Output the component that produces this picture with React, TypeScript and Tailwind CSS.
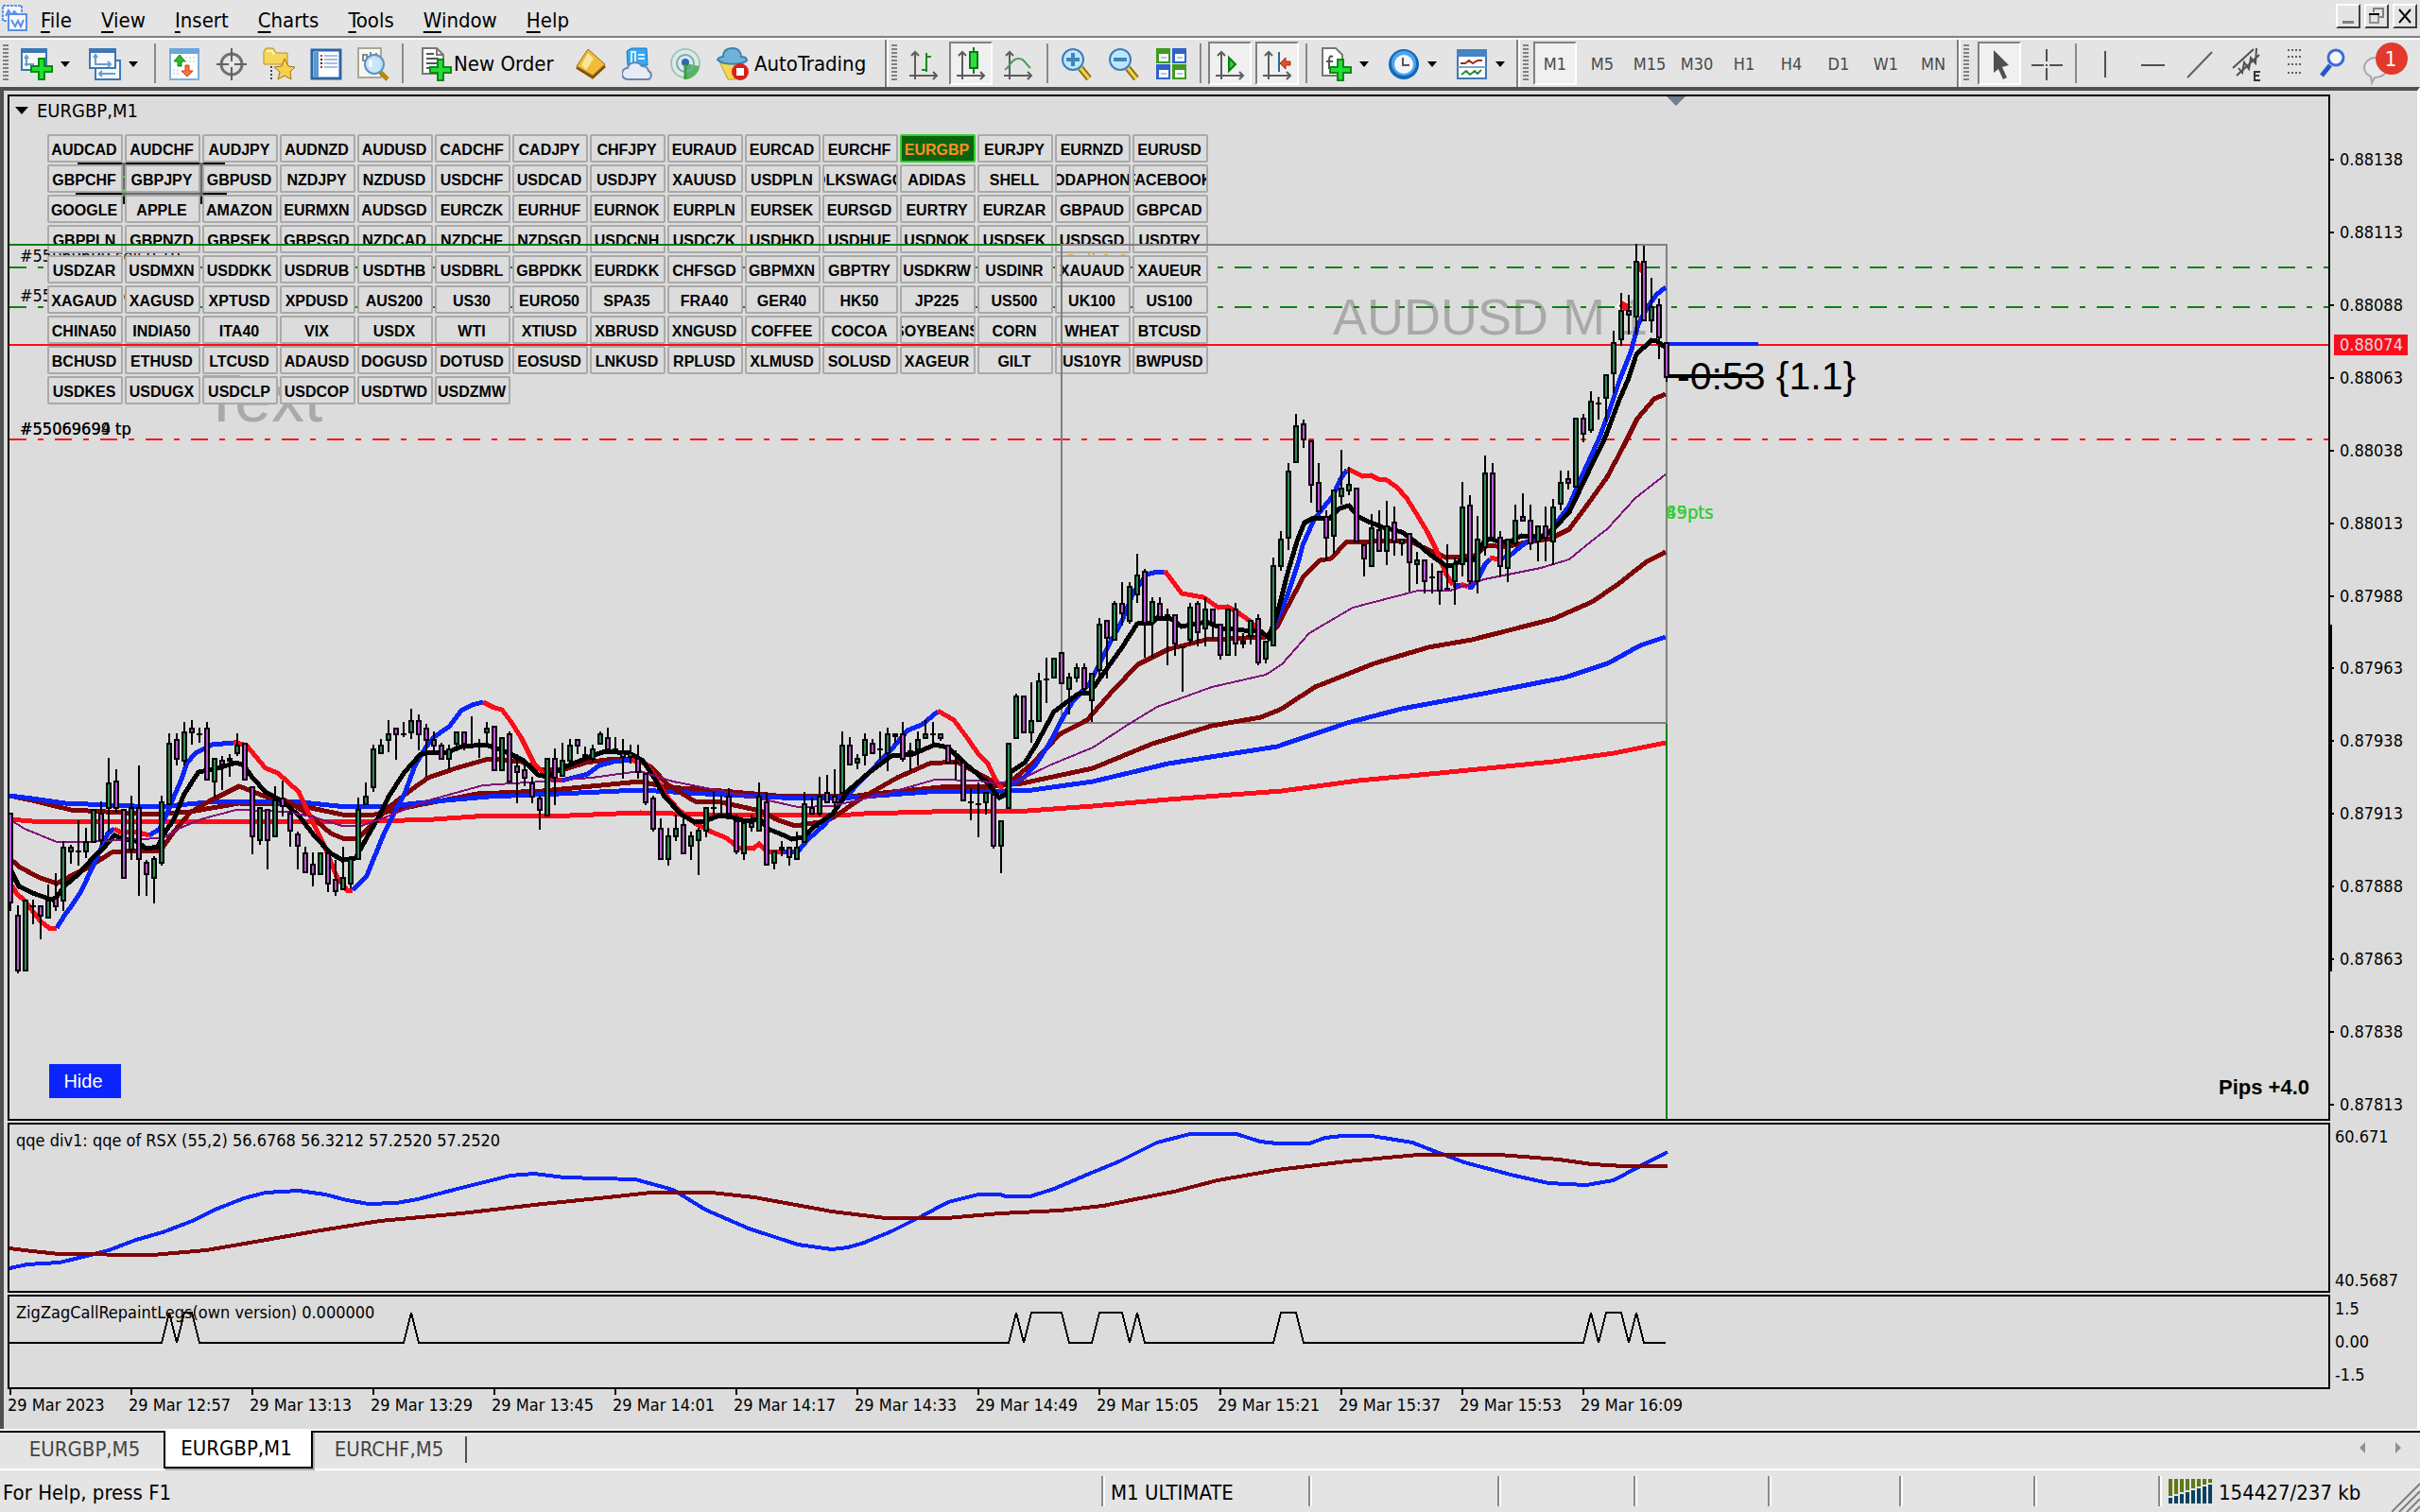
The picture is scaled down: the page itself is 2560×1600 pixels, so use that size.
import React from 'react';
import clsx from 'clsx';

const BLUE = '#0b24fb';
const RED = '#fc0d1b';
const MAROON = '#7f0507';
const GREEN = '#0f7f12';

const menus = ['File', 'View', 'Insert', 'Charts', 'Tools', 'Window', 'Help'];

const timeframes = ['M1', 'M5', 'M15', 'M30', 'H1', 'H4', 'D1', 'W1', 'MN'];

const symbolRows = [
  'AUDCAD AUDCHF AUDJPY AUDNZD AUDUSD CADCHF CADJPY CHFJPY EURAUD EURCAD EURCHF EURGBP EURJPY EURNZD EURUSD',
  'GBPCHF GBPJPY GBPUSD NZDJPY NZDUSD USDCHF USDCAD USDJPY XAUUSD USDPLN VOLKSWAGON ADIDAS SHELL VODAPHONE FACEBOOK',
  'GOOGLE APPLE AMAZON EURMXN AUDSGD EURCZK EURHUF EURNOK EURPLN EURSEK EURSGD EURTRY EURZAR GBPAUD GBPCAD',
  'GBPPLN GBPNZD GBPSEK GBPSGD NZDCAD NZDCHF NZDSGD USDCNH USDCZK USDHKD USDHUF USDNOK USDSEK USDSGD USDTRY',
  'USDZAR USDMXN USDDKK USDRUB USDTHB USDBRL GBPDKK EURDKK CHFSGD GBPMXN GBPTRY USDKRW USDINR XAUAUD XAUEUR',
  'XAGAUD XAGUSD XPTUSD XPDUSD AUS200 US30 EURO50 SPA35 FRA40 GER40 HK50 JP225 US500 UK100 US100',
  'CHINA50 INDIA50 ITA40 VIX USDX WTI XTIUSD XBRUSD XNGUSD COFFEE COCOA SOYBEANS CORN WHEAT BTCUSD',
  'BCHUSD ETHUSD LTCUSD ADAUSD DOGUSD DOTUSD EOSUSD LNKUSD RPLUSD XLMUSD SOLUSD XAGEUR GILT US10YR BWPUSD',
  'USDKES USDUGX USDCLP USDCOP USDTWD USDZMW',
];

const prices = [
  '0.88138', '0.88113', '0.88088', '0.88063', '0.88038', '0.88013', '0.87988',
  '0.87963', '0.87938', '0.87913', '0.87888', '0.87863', '0.87838', '0.87813',
];

const times = [
  '2023', '12:57', '13:13', '13:29', '13:45', '14:01', '14:17',
  '14:33', '14:49', '15:05', '15:21', '15:37', '15:53', '16:09',
];

// Each bar is "high top bottom low" followed by u (up) or d (down).
// Values are thirds of a pixel below the base line of the block.
const barBlocks = [
  {
    base: 680,
    first: 0,
    bars: `541 541 826 850 d,835 866 1042 1050 d,818 818 1042 1042 u,818 836 836 892 d,835 835 868 940 d,768 818 874 874 u,732 810 837 850 d,630 645 820 850 u,640 648 664 700 u,565 662 662 707 d,
588 632 664 682 u,530 530 634 634 u,505 541 628 640 d,366 446 526 598 u,404 440 530 540 d,530 530 748 748 d,487 524 662 688 u,390 524 688 803 d,690 698 736 803 d,680 686 748 827 u,
487 506 700 706 u,290 320 514 514 u,290 308 370 388 d,253 284 376 388 u,247 272 286 324 d,271 286 288 320 d,252 271 440 440 d,368 368 446 490 u,360 374 388 470 d,356 368 380 425 u,
289 324 356 360 u,316 320 440 440 d,458 458 616 670 d,524 524 632 640 u,530 530 628 718 d,458 500 616 616 u,440 494 524 550 d,530 541 598 646 d,600 608 645 718 d,645 668 730 730 d,
668 704 736 773 d,668 668 736 736 u,668 668 766 792 d,688 750 790 803 d,646 744 784 784 u,680 686 766 778 u,490 530 688 688 u,446 488 514 514 u,325 338 460 472 u,304 326 352 352 u,
247 290 310 350 u,272 272 292 370 d,253 288 288 302 d,211 248 286 304 u,230 248 292 340 d,260 272 310 424 d,284 308 328 340 d,318 325 370 370 d,325 338 370 404 u,284 284 326 338 u,
284 284 322 340 d,234 322 322 330 d,308 326 326 368 d,253 272 286 326 u,266 266 406 406 d,302 302 406 406 u,284 290 442 446 d,352 390 412 508 d,385 404 430 454 d,425 442 494 508 d,
487 494 532 592 d,368 368 550 550 u,338 368 430 514 d,320 374 424 424 u,308 326 376 390 u,308 308 328 352 d,330 356 368 370 d,326 338 372 380 u,284 290 322 326 u,270 302 340 345 d,
302 336 346 350 d,308 350 364 430 d,326 350 364 385 u,325 366 412 430 d,412 412 508 514 d,487 494 592 598 d,560 590 688 688 d,590 614 688 706 u,548 590 616 628 u,550 578 670 670 d,
600 614 650 688 u,590 596 628 738 u,524 524 598 620 u,475 524 524 545 d,487 545 545 560 d,460 488 545 560 d,548 566 664 670 d,565 570 670 688 u,545 570 590 600 d,445 488 598 598 u,
475 506 706 706 d,662 662 700 718 u,630 650 662 680 u,645 645 682 706 d,600 645 688 688 u,476 512 634 634 u,494 524 545 545 d,428 488 545 550 u,422 476 508 510 d,404 488 508 520 d`,
  },
  {
    base: 560,
    first: 110,
    bars: `642 686 838 838 u,662 682 752 752 d,712 728 746 764 u,650 668 718 752 u,668 680 712 712 d,644 698 698 730 d,632 650 712 766 u,650 650 662 680 u,614 645 734 740 d,675 700 712 766 u,
644 668 700 752 u,606 645 668 668 u,614 650 650 680 d,650 650 668 674 d,682 682 746 746 d,704 738 746 800 d,740 740 866 866 d,820 866 866 924 d,804 870 870 978 d,834 834 868 908 u,
840 840 1006 1012 d,926 926 1006 1092 u,680 680 890 890 u,524 530 668 668 u,530 530 646 646 d,487 608 646 680 u,458 478 610 610 u,410 474 474 550 d,405 405 472 472 u,392 392 494 494 d,
458 470 508 590 u,428 440 476 484 u,428 440 510 520 d,458 458 544 614 u,284 302 452 475 u,290 290 350 475 d,230 236 356 356 u,170 236 272 304 d,170 182 292 298 u,79 146 212 236 u,
127 134 298 406 d,218 230 300 410 u,218 236 280 280 d,254 268 268 430 d,272 272 368 404 d,370 370 370 515 d,236 248 356 368 u,230 236 332 370 d,218 254 320 374 u,254 254 300 350 d,
302 302 404 412 d,254 254 404 404 u,236 254 368 404 d,330 354 368 380 u,290 290 344 368 u,272 284 424 430 d,356 356 412 424 u,90 115 370 370 u`,
  },
  {
    base: 240,
    first: 168,
    bars: `966 990 1078 1090 u,752 776 992 1026 u,595 632 752 752 u,614 626 676 700 d,680 680 820 874 d,752 812 904 904 d,900 918 992 1060 d,836 836 986 1036 u,710 830 856 880 u,764 818 838 850 u,
830 830 1004 1004 d,1010 1010 1058 1108 d,912 952 1078 1078 u,900 958 1034 1034 d,870 950 1034 1072 u,888 938 1004 1042 d,990 990 1010 1042 u,974 974 1070 1156 d,1034 1058 1076 1132 u,1058 1058 1126 1162 d,
1070 1108 1108 1162 d,1094 1094 1156 1198 d,1010 1144 1154 1154 u,1050 1070 1130 1198 u,812 890 1076 1108 u,854 884 1126 1132 d,920 992 1130 1162 u,728 782 1022 1042 u,752 782 990 990 d,968 986 1078 1108 d,
990 990 1088 1126 u,884 932 1010 1016 u,848 920 938 938 d,884 932 1010 1024 d,950 950 1004 1060 u,890 950 992 1060 d,866 890 1004 1072 u,776 812 884 902 u,776 800 818 836 d,608 608 830 830 u,
595 608 658 682 d,524 554 646 656 u,542 558 558 610 d,470 470 544 616 u,332 368 470 526 u,212 266 358 376 u,218 266 280 340 d,55 110 286 340 u,60 110 298 298 d,164 254 298 334 u,
230 248 356 418 d,368 368 478 490 d`,
  },
];

const snap = (base: number, v: number) => base + Math.round(v / 6) * 2;

const candles = barBlocks.flatMap(({ base, first, bars }) =>
  bars.split(',').map((bar, i) => {
    const [high, top, bottom, low, dir] = bar.trim().split(' ');
    return {
      x: 11 + (first + i) * 8,
      high: snap(base, +high),
      top: snap(base, +top),
      bottom: snap(base, +bottom),
      low: snap(base, +low),
      up: dir === 'u',
    };
  })
);

const slowLines = [
  {
    color: RED,
    points: '10,867 34,869 189,869 367,870 459,867 517,863 603,863 677,860 746,862 900,862 914,861 1023,858 1087,858 1156,853 1236,846 1356,837 1437,826 1523,818 1643,806 1707,797 1762,786',
  },
  {
    color: MAROON,
    points: '10,842 34,847 75,857 166,862 201,859 253,850 310,851 362,862 396,862 442,852 505,840 574,837 677,827 706,833 763,837 821,842 900,843 914,841 995,833 1052,832 1081,829 1156,813 1219,787 1282,768 1334,759 1356,750 1391,727 1454,702 1511,685 1557,677 1643,655 1684,637 1712,618 1741,595 1762,584',
  },
  {
    color: BLUE,
    points: '10,842 34,845 69,850 166,854 230,848 310,848 367,854 413,853 459,848 517,843 591,840 677,836 746,840 827,844 900,844 914,843 995,837 1064,837 1092,836 1156,827 1236,808 1351,790 1425,765 1483,750 1569,734 1655,717 1701,702 1735,683 1762,674',
  },
  {
    color: MAROON,
    points: '10,908 20,917 40,928 60,935 75,927 95,917 118,902 144,900 169,901 184,880 201,860 221,848 253,832 281,843 304,848 327,862 350,882 365,888 379,887 396,870 413,853 436,835 453,823 482,813 517,803 551,806 574,815 597,814 620,807 649,803 674,803 689,812 706,830 735,848 763,849 804,858 821,867 841,874 867,870 880,866 914,843 949,823 983,808 1012,806 1032,817 1058,831 1069,827 1092,808 1121,777 1150,762 1178,730 1204,703 1236,687 1276,677 1339,674 1351,663 1362,642 1379,610 1396,593 1408,591 1425,573 1450,573 1490,572 1507,580 1530,590 1560,588 1573,577 1593,579 1613,574 1640,570 1660,560 1680,533 1700,505 1717,473 1732,443 1750,422 1762,417',
  },
];

const purpleLine =
  '10,867 26,877 60,891 92,891 144,888 172,887 189,877 212,867 250,857 304,859 333,865 362,874 382,874 402,867 453,847 511,831 574,827 626,823 677,816 712,827 763,837 804,845 844,854 880,853 937,840 989,825 1035,826 1052,829 1075,827 1110,810 1156,791 1193,767 1224,748 1282,727 1339,714 1356,703 1385,670 1431,643 1500,625 1534,625 1570,613 1630,601 1660,592 1683,573 1700,560 1730,527 1762,502';

const blackLine =
  '10,918 20,938 37,946 55,952 60,949 69,937 83,925 99,907 109,898 121,884 131,888 144,890 155,898 167,896 175,880 184,867 195,840 210,817 230,813 250,807 258,810 267,823 281,838 299,848 316,863 333,885 350,903 362,910 376,908 390,883 402,862 411,843 428,817 445,798 459,796 474,796 488,790 514,788 534,795 554,805 569,820 580,822 594,813 609,807 626,800 640,795 666,797 680,805 692,823 703,843 721,862 735,870 746,869 761,863 775,865 789,869 804,867 812,877 827,883 838,888 850,886 861,875 881,861 897,837 920,817 943,800 966,798 989,788 1003,791 1021,808 1035,820 1046,830 1057,844 1065,840 1069,817 1084,807 1095,790 1115,753 1130,742 1141,734 1153,733 1167,713 1187,685 1203,660 1219,659 1224,654 1239,655 1250,663 1276,658 1293,665 1316,667 1334,668 1342,675 1351,650 1363,603 1372,573 1380,553 1390,548 1407,548 1417,538 1427,535 1437,547 1450,553 1463,558 1483,563 1497,573 1513,587 1530,599 1538,598 1547,592 1560,592 1570,573 1577,570 1587,574 1597,573 1610,567 1630,568 1643,560 1660,542 1680,500 1698,463 1713,423 1723,400 1731,375 1747,360 1753,361 1762,368';

// Fast average, coloured by slope
const fastLine = [
  { up: false, points: '10,933 18,946 26,953 43,975 52,982 60,982' },
  { up: true, points: '60,982 68,969 76,958 86,943 99,915 108,895 114,882 121,877' },
  { up: false, points: '121,877 126,880 134,880 147,881 158,884' },
  { up: true, points: '158,884 169,877 177,860 184,843 191,827 198,807 207,797 224,788 247,786' },
  { up: false, points: '247,785 261,789 281,813 294,818 316,838 330,868 344,897 356,927 367,942 373,942' },
  { up: true, points: '373,942 388,927 396,907 405,885 416,862 428,840 439,810 451,790 459,780 475,769 488,752 499,746 511,743' },
  { up: false, points: '511,743 523,749 531,751 540,763 551,780 565,808 574,817 583,825 594,826' },
  { up: true, points: '594,826 606,823 622,819 634,810 649,806 666,804' },
  { up: false, points: '666,804 683,808 692,820 703,840 718,857 735,871 752,880 769,887 781,897 797,898 803,893 811,901 827,902' },
  { up: true, points: '827,902 844,901 855,888 873,872 891,847 914,823 943,793 960,773 975,767 992,753' },
  { up: false, points: '992,752 1009,762 1024,782 1035,798 1045,808 1052,823 1060,835' },
  { up: true, points: '1066,833 1069,831 1084,822 1095,810 1110,787 1124,760 1135,742 1153,723 1164,700 1176,677 1187,657 1199,627 1213,608 1224,605 1232,605' },
  { up: false, points: '1232,604 1250,628 1273,632 1289,643 1298,642 1308,647 1322,657 1339,674' },
  { up: true, points: '1342,674 1350,658 1362,630 1374,593 1378,577 1390,550 1400,537 1410,525 1418,507 1425,497' },
  { up: false, points: '1425,496 1442,504 1450,503 1458,507 1467,508 1477,515 1488,527 1498,543 1510,563 1520,583 1530,608 1537,619' },
  { up: true, points: '1537,619 1545,619' },
  { up: false, points: '1545,618 1553,621' },
  { up: true, points: '1553,621 1557,621 1563,613 1571,597 1576,592' },
  { up: false, points: '1576,590 1585,592' },
  { up: true, points: '1585,592 1597,588 1613,575 1638,565 1660,535 1672,507 1682,485 1692,463 1703,433 1713,403 1725,373 1733,343 1743,325 1752,312 1762,304' },
];

const qqeLines = [
  {
    color: BLUE,
    points: '10,1342 29,1338 63,1336 92,1329 115,1323 144,1312 172,1304 201,1293 230,1279 258,1268 281,1262 316,1260 344,1264 367,1270 390,1274 419,1273 442,1269 488,1257 540,1244 565,1242 597,1246 672,1248 712,1259 746,1280 792,1300 844,1317 880,1322 897,1320 914,1315 943,1303 975,1287 1003,1272 1035,1264 1058,1264 1064,1266 1090,1266 1115,1258 1150,1243 1184,1229 1224,1209 1259,1200 1308,1200 1333,1208 1351,1210 1385,1210 1402,1204 1420,1202 1451,1202 1494,1209 1517,1218 1549,1230 1598,1243 1638,1252 1678,1254 1707,1249 1735,1234 1764,1219',
  },
  {
    color: MAROON,
    points: '10,1321 34,1324 63,1327 161,1328 218,1323 276,1313 333,1303 402,1292 488,1284 574,1274 643,1267 689,1262 752,1262 798,1267 880,1282 937,1289 1001,1289 1058,1284 1121,1281 1167,1276 1196,1270 1242,1261 1288,1249 1351,1238 1425,1229 1500,1222 1586,1222 1649,1227 1684,1232 1718,1234 1764,1234',
  },
];

const zigzag =
  '10,1421 171,1421 179,1389 187,1421 195,1389 203,1389 211,1421 427,1421 435,1389 443,1421 1067,1421 1075,1389 1083,1421 1091,1389 1123,1389 1131,1421 1155,1421 1163,1389 1187,1389 1195,1421 1203,1389 1211,1421 1347,1421 1355,1389 1371,1389 1379,1421 1675,1421 1683,1389 1691,1421 1699,1389 1715,1389 1723,1421 1731,1389 1739,1421 1762,1421';

/* ---------- icons ---------- */

const Icon = ({ children }: { children: React.ReactNode }) => (
  <svg viewBox="0 0 34 36" className="h-9 w-[34px] shrink-0" aria-hidden="true">
    {children}
  </svg>
);

const Plus = ({ x, y }: { x: number; y: number }) => (
  <path
    d={`M${x + 8} ${y}h6v8h8v6h-8v8h-6v-8h-8v-6h8z`}
    fill="#22dd33"
    stroke="#0a8a14"
    strokeWidth="2"
  />
);

const NewChartIcon = () => (
  <Icon>
    <rect x="1" y="2" width="26" height="22" fill="#f4f8fc" stroke="#3d78b4" strokeWidth="2" />
    <rect x="1" y="1" width="26" height="5" fill="#3d78b4" />
    <path d="M6 10v10M4 18h10M4 12l2-3 2 3" stroke="#6c9cc4" strokeWidth="2" fill="none" />
    <Plus x={11} y={12} />
  </Icon>
);

const ProfilesIcon = () => (
  <Icon>
    <rect x="7" y="14" width="26" height="20" fill="#f4f8fc" stroke="#3d78b4" strokeWidth="2" />
    <path d="M12 28h16M14 25l-3 3 3 3" stroke="#6c9cc4" strokeWidth="2" fill="none" />
    <rect x="1" y="2" width="27" height="20" fill="#f4f8fc" stroke="#3d78b4" strokeWidth="2" />
    <rect x="1" y="1" width="27" height="5" fill="#3d78b4" />
    <path d="M7 9v9h16M20 15l3 3-3 3M5 11l2-3 2 3" stroke="#6c9cc4" strokeWidth="2" fill="none" />
  </Icon>
);

const MarketWatchIcon = () => (
  <Icon>
    <rect x="2" y="2" width="30" height="32" fill="#fff" stroke="#7db0dc" strokeWidth="2" />
    <rect x="1" y="1" width="32" height="6" fill="#6ba6dc" />
    <path d="M18 11h11M18 15h11M5 24h8M5 28h8" stroke="#ddd" strokeWidth="2" strokeDasharray="2 2" />
    <path d="M12 8l6 7h-4v5h-4v-5H6z" fill="#2eb82e" stroke="#157a15" />
    <path d="M20 31l6-6h-4v-6h-4v6h-4z" fill="#ff7043" stroke="#c2401c" />
  </Icon>
);

const DataWindowIcon = () => (
  <Icon>
    <circle cx="17" cy="18" r="11" fill="none" stroke="#707070" strokeWidth="3" />
    <path d="M17 1v14M17 21v14M1 18h13M20 18h13" stroke="#606060" strokeWidth="2" />
  </Icon>
);

const NavigatorIcon = () => (
  <Icon>
    <path d="M1 17V5l2-4h8l3 5h12v12H1z" fill="#f7d65e" stroke="#b8921a" />
    <path d="M4 4h6l2 4" fill="none" stroke="#fdf3b4" strokeWidth="2" />
    <path d="M9 20v14" stroke="#444" strokeWidth="2" strokeDasharray="2 2" />
    <path d="M23 12l4 8 7 1-5 5 1 8-7-4-7 4 2-8-6-5 8-1z" fill="#f8cf4a" stroke="#9c7410" />
  </Icon>
);

const TerminalIcon = () => (
  <Icon>
    <rect x="2" y="3" width="30" height="30" fill="#fff" stroke="#2a65a8" strokeWidth="3" />
    <rect x="4" y="5" width="5" height="27" fill="#5f98cf" />
    <path d="M11 9h2M11 21h2" stroke="#d22" strokeWidth="2" />
    <path d="M11 13h2M11 17h2" stroke="#222" strokeWidth="2" />
    <path d="M15 9h14M15 13h14M15 17h14M15 21h14" stroke="#a9bce6" strokeWidth="2" />
  </Icon>
);

const TesterIcon = () => (
  <Icon>
    <path d="M1 1h24v31H1z" fill="#f8f8f4" stroke="#aaa895" strokeWidth="2" />
    <path d="M6 8h4v6H6zM14 5v8M20 6v6" stroke="#888" strokeWidth="2" fill="none" />
    <path d="M24 26l8 8" stroke="#b8860b" strokeWidth="5" />
    <circle cx="18" cy="18" r="10" fill="#c3e2f8" fillOpacity=".9" stroke="#5b93c4" strokeWidth="2" />
    <path d="M14 13v8" stroke="#fff" strokeWidth="3" />
  </Icon>
);

const NewOrderIcon = () => (
  <Icon>
    <path d="M3 1h15l7 7v20H3z" fill="#fff" stroke="#777" strokeWidth="2" />
    <path d="M18 1v7h7" fill="none" stroke="#777" strokeWidth="2" />
    <path d="M7 7h8M7 12h13M7 17h13M7 22h6" stroke="#555" strokeWidth="2" />
    <Plus x={11} y={13} />
  </Icon>
);

const MetaEditorIcon = () => (
  <Icon>
    <path d="M1 22L14 3l19 18-14 13z" fill="#b87818" />
    <path d="M2 20L14 2l18 16-13 12z" fill="#f0bb3c" stroke="#9a6a10" />
    <path d="M7 19l7-13 6 6-8 12z" fill="#fbe59a" />
    <path d="M2 22l17 10 13-12" fill="none" stroke="#7a4d08" strokeWidth="2" />
  </Icon>
);

const CommunityIcon = () => (
  <Icon>
    <path d="M5 4l5-3h16l1 18H6z" fill="#36a8f4" stroke="#1276c4" />
    <path d="M10 5h4v12h-4zM17 8h7M17 12h7" stroke="#d8f0ff" strokeWidth="2" fill="none" />
    <path d="M6 34a6 6 0 010-12 8 7 0 0115-2 6 6 0 017 5 5 5 0 010 9z" fill="#e6ecf6" stroke="#6d84b0" strokeWidth="2" />
  </Icon>
);

const SignalsIcon = () => (
  <Icon>
    <circle cx="17" cy="17" r="15" fill="#dcebe6" stroke="#a4c4bc" strokeWidth="2" />
    <path d="M17 17V34A16 16 0 0032 20z" fill="#57b45c" />
    <circle cx="17" cy="17" r="9" fill="none" stroke="#7ba7bc" strokeWidth="2" />
    <circle cx="17" cy="16" r="4" fill="#2d67b8" />
    <path d="M17 18v16" stroke="#3c9c42" strokeWidth="3" />
  </Icon>
);

const AutoTradingIcon = () => (
  <Icon>
    <path d="M3 15h26l-9 19h-8z" fill="#f8d552" stroke="#c09a1c" />
    <path d="M1 13c2-3 6-3 6-3 0-6 4-9 10-9s9 4 9 9c3 0 6 1 6 4-5 5-26 5-31-1z" fill="#6fb4d8" stroke="#3c82ac" strokeWidth="2" />
    <circle cx="25" cy="26" r="9" fill="#d8201c" />
    <rect x="21" y="22" width="8" height="8" fill="#fff" />
  </Icon>
);

const Axes = () => (
  <path d="M8 6v28M2 30h28M4 9l4-4 4 4M27 26l4 4-4 4" fill="none" stroke="#5c5c5c" strokeWidth="2" />
);

const BarsIcon = () => (
  <Icon>
    <Axes />
    <path d="M20 6v20M20 10h5M15 24h5" stroke="#158a1c" strokeWidth="2" fill="none" />
  </Icon>
);

const CandlesIcon = () => (
  <Icon>
    <Axes />
    <path d="M20 0v28" stroke="#0b7a12" strokeWidth="2" />
    <rect x="16" y="5" width="8" height="17" fill="#2be03a" stroke="#0b7a12" strokeWidth="2" />
  </Icon>
);

const LineIcon = () => (
  <Icon>
    <Axes />
    <path d="M3 24C9 20 10 12 17 12s7 5 13 10" stroke="#4a9c50" strokeWidth="2" fill="none" />
  </Icon>
);

const ZoomIcon = ({ plus }: { plus?: boolean }) => (
  <Icon>
    <path d="M21 22l9 11" stroke="#8f7210" strokeWidth="7" />
    <path d="M21 22l9 11" stroke="#f0d252" strokeWidth="3" />
    <circle cx="13" cy="13" r="11" fill="#bfe6fb" stroke="#3c7cbc" strokeWidth="2" />
    <path d={plus ? 'M6 13h14M13 6v14' : 'M6 13h14'} stroke="#3f86b6" strokeWidth="4" />
  </Icon>
);

const TileIcon = () => (
  <Icon>
    <path d="M1 1h15v16H1zM18 18h15v16H18z" fill="#3d9c20" />
    <path d="M18 1h15v16H18zM1 18h15v16H1z" fill="#2f62c8" />
    <path d="M4 7h10v8H4zM21 7h10v8H21zM4 24h10v8H4zM21 24h10v8H21z" fill="#fff" />
    <path d="M6 11h6M23 11h6M6 28h6M23 28h6" stroke="#aac6ea" strokeWidth="2" />
  </Icon>
);

const AutoScrollIcon = () => (
  <Icon>
    <Axes />
    <path d="M16 11l7 7-7 7z" fill="#2ed03c" stroke="#0b7a12" strokeWidth="2" />
  </Icon>
);

const ShiftIcon = () => (
  <Icon>
    <Axes />
    <path d="M19 5v21" stroke="#2c6a92" strokeWidth="2" />
    <path d="M20 17l6-6v4h5v4h-5v4z" fill="#e0522a" stroke="#9c2c0c" />
  </Icon>
);

const IndicatorsIcon = () => (
  <Icon>
    <path d="M3 1h14l7 7v22H3z" fill="#fff" stroke="#777" strokeWidth="2" />
    <path d="M14 10c-4-2-4 2-4 5v8M7 15h7" stroke="#555" strokeWidth="2" fill="none" />
    <Plus x={11} y={13} />
  </Icon>
);

const PeriodsIcon = () => (
  <Icon>
    <circle cx="17" cy="18" r="16" fill="#1468b8" />
    <circle cx="17" cy="17" r="13" fill="#4ea6ea" />
    <circle cx="17" cy="18" r="10" fill="#f2f6fa" />
    <path d="M16 11v8h7" stroke="#555" strokeWidth="2" fill="none" />
  </Icon>
);

const TemplatesIcon = () => (
  <Icon>
    <rect x="2" y="3" width="30" height="30" fill="#fff" stroke="#3d78b4" strokeWidth="2" />
    <rect x="1" y="2" width="32" height="8" fill="#4284c4" />
    <path d="M2 21h30" stroke="#7fa4c8" strokeWidth="2" />
    <path d="M5 17h5l4-3 4 3 5-3h5" stroke="#9c2a18" strokeWidth="2" fill="none" />
    <path d="M6 29l5-4 4 4 5-4 3 3 4-4" stroke="#2c8a34" strokeWidth="2" fill="none" />
  </Icon>
);

const CursorIcon = () => (
  <Icon>
    <path d="M11 3v24l5-4 5 11 4-2-5-11 7-2z" fill="#505050" />
  </Icon>
);

const CrosshairIcon = () => (
  <Icon>
    <path d="M17 2v13M17 22v13M1 19h13M20 19h14" stroke="#505050" strokeWidth="2" />
    <path d="M16 18h2v2h-2z" fill="#505050" />
  </Icon>
);

const VLineIcon = () => (
  <Icon>
    <path d="M17 4v28" stroke="#505050" strokeWidth="2" />
  </Icon>
);

const HLineIcon = () => (
  <Icon>
    <path d="M5 19h25" stroke="#505050" strokeWidth="2" />
  </Icon>
);

const TrendIcon = () => (
  <Icon>
    <path d="M4 32L30 5" stroke="#606060" strokeWidth="2" />
  </Icon>
);

const ChannelIcon = () => (
  <Icon>
    <path d="M2 22L24 2M6 30L30 8M8 22l4 5 2-11 5 7 2-12 5 6 1-16" stroke="#505050" strokeWidth="2" fill="none" />
    <path d="M31 26h-6v9h6M25 30h5" stroke="#333" strokeWidth="2" fill="none" />
  </Icon>
);

const FiboIcon = () => (
  <Icon>
    <path d="M10 3h15M10 10h15M10 18h15M10 27h15" stroke="#606060" strokeWidth="2" strokeDasharray="2 2" />
  </Icon>
);

const SearchIcon = () => (
  <Icon>
    <path d="M5 31l9-11" stroke="#2458c8" strokeWidth="5" />
    <circle cx="20" cy="12" r="8" fill="#f4f6fc" stroke="#3a6cd8" strokeWidth="3" />
  </Icon>
);

const AlertIcon = () => (
  <svg viewBox="0 0 50 50" className="size-[50px] shrink-0" aria-hidden="true">
    <path d="M4 30a12 11 0 0124 0 12 10 0 01-13 10l-3 6-1-7a12 11 0 01-7-9z" fill="#e8e8ee" stroke="#a8a8ac" strokeWidth="2" />
    <circle cx="33" cy="20" r="17" fill="#e2392c" />
    <text x="32" y="28" textAnchor="middle" fontFamily="DejaVu Sans Condensed" fontSize="22" fill="#fff">
      1
    </text>
  </svg>
);

/* ---------- toolbar pieces ---------- */

const Grip = () => (
  <div className="flex w-3 shrink-0 items-center justify-center">
    <div className="h-10 w-[6px] bg-[repeating-linear-gradient(to_bottom,#808080_0px,#808080_2px,transparent_2px,transparent_4px)]" />
  </div>
);

const Separator = () => (
  <div className="flex w-3 shrink-0 justify-center py-1">
    <div className="w-[2px] bg-[#8a8a8a]" />
  </div>
);

const GroupEdge = () => <div className="w-1 shrink-0 border-l-2 border-r-2 border-l-[#808080] border-r-white" />;

type ToolProps = {
  label: string;
  pressed?: boolean;
  children: React.ReactNode;
};

const Tool = ({ label, pressed, children }: ToolProps) => (
  <button
    type="button"
    aria-label={label}
    aria-pressed={pressed}
    className="flex w-[50px] shrink-0 items-center justify-center py-[2px] text-[18px] text-[#4a4a4a]"
  >
    <span
      className={clsx(
        'flex h-full w-[46px] items-center justify-center border-2 pt-[2px]',
        pressed ? 'border-t-[#808080] border-l-[#808080] border-r-white border-b-white bg-[#f0f0f0]' : 'border-transparent'
      )}
    >
      {children}
    </span>
  </button>
);

const DropTool = ({ label, children }: ToolProps) => (
  <button type="button" aria-label={label} className="flex w-[72px] shrink-0 items-center gap-2 pt-[2px] pl-2">
    {children}
    <span className="border-x-[5px] border-t-[6px] border-x-transparent border-t-black" />
  </button>
);

const Toolbar = () => (
  <div className="flex h-[50px] overflow-hidden">
    <Grip />
    <div className="w-[2px]" />
    <DropTool label="New chart"><NewChartIcon /></DropTool>
    <DropTool label="Profiles"><ProfilesIcon /></DropTool>
    <Separator />
    <Tool label="Market watch"><MarketWatchIcon /></Tool>
    <Tool label="Data window"><DataWindowIcon /></Tool>
    <Tool label="Navigator"><NavigatorIcon /></Tool>
    <Tool label="Terminal"><TerminalIcon /></Tool>
    <Tool label="Strategy tester"><TesterIcon /></Tool>
    <Separator />
    <button type="button" className="flex w-[168px] shrink-0 items-center gap-[2px] pt-[2px] pl-3 whitespace-nowrap">
      <NewOrderIcon />
      New Order
    </button>
    <Tool label="MetaEditor"><MetaEditorIcon /></Tool>
    <Tool label="Community"><CommunityIcon /></Tool>
    <Tool label="Signals"><SignalsIcon /></Tool>
    <button type="button" className="flex w-[186px] shrink-0 items-center gap-[6px] pt-[2px] pl-2 whitespace-nowrap">
      <AutoTradingIcon />
      AutoTrading
    </button>
    <GroupEdge />
    <Grip />
    <Tool label="Bar chart"><BarsIcon /></Tool>
    <Tool label="Candlesticks" pressed><CandlesIcon /></Tool>
    <Tool label="Line chart"><LineIcon /></Tool>
    <Separator />
    <Tool label="Zoom in"><ZoomIcon plus /></Tool>
    <Tool label="Zoom out"><ZoomIcon /></Tool>
    <Tool label="Tile windows"><TileIcon /></Tool>
    <Separator />
    <Tool label="Auto scroll" pressed><AutoScrollIcon /></Tool>
    <Tool label="Chart shift" pressed><ShiftIcon /></Tool>
    <Separator />
    <DropTool label="Indicators"><IndicatorsIcon /></DropTool>
    <DropTool label="Periods"><PeriodsIcon /></DropTool>
    <DropTool label="Templates"><TemplatesIcon /></DropTool>
    <GroupEdge />
    <Grip />
    {timeframes.map((tf) => (
      <Tool key={tf} label={tf} pressed={tf === 'M1'}>{tf}</Tool>
    ))}
    <GroupEdge />
    <Grip />
    <div className="w-1" />
    <Tool label="Cursor" pressed><CursorIcon /></Tool>
    <Tool label="Crosshair"><CrosshairIcon /></Tool>
    <Separator />
    <Tool label="Vertical line"><VLineIcon /></Tool>
    <Tool label="Horizontal line"><HLineIcon /></Tool>
    <Tool label="Trendline"><TrendIcon /></Tool>
    <Tool label="Equidistant channel"><ChannelIcon /></Tool>
    <Tool label="Fibonacci"><FiboIcon /></Tool>
    <button type="button" aria-label="Search" className="flex w-8 items-center justify-center"><SearchIcon /></button>
    <button type="button" aria-label="Notifications" className="flex flex-1 items-center justify-center"><AlertIcon /></button>
  </div>
);

const windowButton =
  'flex h-[26px] w-[26px] items-center justify-center border-2 border-t-white border-l-white border-r-[#404040] border-b-[#404040] bg-[#e4e4e4]';

const MenuBar = () => (
  <header className="flex h-[42px] items-start justify-between border-b-2 border-white">
    <div className="flex h-10 w-full items-center border-b-2 border-[#808080]">
      <svg viewBox="0 0 30 30" className="mr-[13px] h-[30px] w-[30px]" aria-hidden="true">
        <rect x="3" y="2" width="20" height="16" fill="#f4f8ff" stroke="#5b8fe8" strokeWidth="2" strokeDasharray="3 1" />
        <path d="M6 13l3-6 3 5 3-4 4 4" fill="none" stroke="#5b8fe8" strokeWidth="2" />
        <rect x="9" y="11" width="19" height="17" fill="#f4f8ff" stroke="#5b8fe8" strokeWidth="2" />
        <path d="M12 17l4 7 3-6 3 6 3-7" fill="none" stroke="#5b8fe8" strokeWidth="2" />
      </svg>
      <nav className="flex gap-[31px] pt-[6px]">
        {menus.map((m) => (
          <button key={m} type="button" className="leading-6">
            <span className="underline decoration-2 underline-offset-4">{m[0]}</span>
            {m.slice(1)}
          </button>
        ))}
      </nav>
      <div className="mr-[3px] mb-1 ml-auto flex gap-1">
        <button type="button" aria-label="Minimize" className={windowButton}>
          <span className="mt-3 h-[3px] w-3 bg-[#808080]" />
        </button>
        <button type="button" aria-label="Restore" className={windowButton}>
          <svg viewBox="0 0 20 20" className="size-5" fill="none" strokeWidth="2" aria-hidden="true">
            <path d="M7 6V2h10v9h-4" stroke="#808080" />
            <path d="M3 8h9v9H3z" stroke="#909090" />
            <path d="M2 8h11" stroke="#000" />
          </svg>
        </button>
        <button type="button" aria-label="Close" className={windowButton}>
          <svg viewBox="0 0 20 20" className="size-5" stroke="#000" strokeWidth="2" aria-hidden="true">
            <path d="M4 3l12 14M16 3L4 17" />
          </svg>
        </button>
      </div>
    </div>
  </header>
);

/* ---------- chart ---------- */

const dashDot = '18 12 6 12';

const BackLayer = () => (
  <svg className="block h-[1082px] w-full" aria-hidden="true">
    <g transform="translate(-10 -102)" fontFamily="DejaVu Sans Condensed" fontSize="18">
      <path d="M16 113h14l-7 8z" />
      <path d="M1763 102h20l-10 10z" fill="#708090" />
      <text x="39" y="124" fontSize="20">EURGBP,M1</text>
      <text x="1410" y="354" fontFamily="Liberation Sans" fontSize="54" fill="#a9a9a9">AUDUSD M 1</text>
      <text x="213" y="446" fontFamily="Liberation Sans" fontSize="70" fill="#a9a9a9">Text</text>
      <text x="21" y="277">#55069699 sell 0.10</text>
      <text x="21" y="319">#55069694 sell 0.10</text>
      <text x="21" y="460">#55069699 tp</text>
      <text x="21" y="460">#55069694 tp</text>
      <text x="1127" y="283" fontSize="20" fill="#daa520">Sell 1.0</text>
      <g shapeRendering="crispEdges" strokeWidth="2" fill="none">
        <path d="M82 173h156M80 205h160M131 172v44M213 172v44" stroke="#000" />
        <path d="M130 205h84M131 172v36M213 172v36" stroke="#6b6b6b" strokeWidth="4" />
        <path d="M131 186v2M131 200v4" stroke="#32e032" />
        <path d="M10 283H2600M10 325H2600" stroke={GREEN} strokeDasharray={dashDot} />
        <path d="M10 465H2600" stroke={RED} strokeDasharray={dashDot} />
      </g>
    </g>
  </svg>
);

const FrontLayer = () => (
  <svg className="pointer-events-none absolute inset-0 size-full" role="img" aria-label="EURGBP one minute candles">
    <g transform="translate(-10 -102)">
      <g shapeRendering="crispEdges" fill="none" strokeWidth="2">
        <path d="M10 259H1123" stroke={GREEN} />
        <path d="M10 365H2600" stroke={RED} />
        <path d="M1763 765V1184" stroke={GREEN} />
        <path d="M1123 259H1763V765H1123z" stroke="#808080" />
        <g strokeWidth="5">
          {slowLines.map((l, i) => (
            <polyline key={i} points={l.points} stroke={l.color} />
          ))}
          {fastLine.map((l, i) => (
            <polyline key={i} points={l.points} stroke={l.up ? BLUE : RED} />
          ))}
          <polyline points={blackLine} stroke="#000" />
        </g>
        <polyline points={purpleLine} stroke="#7f0f7f" />
      </g>
      <g fill={RED} stroke="#fff" strokeWidth="2">
        <path d="M1711 324l5-7 7 4v9h-5z" />
        <path d="M1728 281l4-6 8 5v10h-5z" />
      </g>
      <g shapeRendering="crispEdges">
        {candles.map((c) => (
          <g key={c.x}>
            <rect x={c.x - 1} y={c.high} width="2" height={Math.max(c.low - c.high, 2)} />
            <rect x={c.x - 3} y={c.top} width="6" height={Math.max(c.bottom - c.top, 2)} />
            {c.bottom - c.top > 4 && (
              <rect
                x={c.x - 1}
                y={c.top + 2}
                width="2"
                height={c.bottom - c.top - 4}
                fill={c.up ? '#2e8b57' : '#ba55d3'}
              />
            )}
          </g>
        ))}
        <rect x="1766" y="362" width="94" height="4" fill={BLUE} />
        <rect x="1766" y="396" width="94" height="4" />
      </g>
      <text x="1774" y="412" fontFamily="Liberation Sans" fontSize="41">-0:53 {'{1.1}'}</text>
      <g fontFamily="DejaVu Sans Condensed" fontSize="20" fill="#32cd32">
        <text x="1762" y="549">85pts</text>
        <text x="1762" y="549">49pts</text>
      </g>
    </g>
  </svg>
);

const SymbolGrid = () => (
  <div className="absolute top-10 left-10 grid grid-cols-[repeat(15,80px)] gap-[2px]">
    {symbolRows.flatMap((row) => row.split(' ')).map((s) => (
      <button
        key={s}
        type="button"
        className={clsx(
          'flex h-[30px] justify-center overflow-hidden rounded-[2px] border-2 pt-px pr-[2px] font-["Liberation_Sans",sans-serif] text-[16px] leading-7 font-bold whitespace-nowrap',
          s === 'EURGBP'
            ? 'border-[#32cd32] bg-[#0b640d] text-[#fd8f23]'
            : 'border-[#a9a9a9] bg-[#dcdcdc] text-black'
        )}
      >
        {s}
      </button>
    ))}
  </div>
);

const PriceAxis = () => (
  <div className="relative flex w-[92px] flex-col justify-between pt-[58px] pb-[6px]">
    {prices.map((p) => (
      <div key={p} className="flex items-center gap-[6px]">
        <span className="h-[2px] w-1 bg-black" />
        {p}
      </div>
    ))}
    <div className="absolute top-[254px] left-1 flex h-[22px] w-[78px] items-center bg-[#fc0d1b] pl-[6px] text-[#dcdcdc]">
      0.88074
    </div>
    <div className="absolute top-[561px] left-0 h-[367px] w-[2px] bg-black" />
  </div>
);

const ChartWindow = () => (
  <main className="flex grow flex-col border-t-4 border-r-[3px] border-t-[#505050] border-r-white bg-[#dcdcdc]">
    <div className="flex grow flex-col border-l-4 border-l-[#505050] pt-1 pl-1 text-[18px] leading-[22px]">
      <section className="mb-[2px] flex">
        <div className="relative min-w-0 flex-1 overflow-hidden border-2 border-black">
          <BackLayer />
          <SymbolGrid />
          <FrontLayer />
          <button
            type="button"
            className='absolute bottom-[22px] left-[42px] h-9 w-[76px] bg-[#0b24fb] pr-1 font-["Liberation_Sans",sans-serif] text-[20px] text-white'
          >
            Hide
          </button>
          <div className='absolute right-5 bottom-[22px] font-["Liberation_Sans",sans-serif] text-[22px] font-bold'>
            Pips +4.0
          </div>
        </div>
        <PriceAxis />
      </section>

      <section className="mb-[2px] flex">
        <div className="relative min-w-0 flex-1 overflow-hidden border-2 border-black">
          <h2 className="absolute top-[6px] left-[7px]">
            qqe div1: qqe of RSX (55,2) 56.6768 56.3212 57.2520 57.2520
          </h2>
          <svg className="block h-44 w-full" role="img" aria-label="qqe of RSX">
            <g transform="translate(-10 -1190)" fill="none" strokeWidth="4" shapeRendering="crispEdges">
              {qqeLines.map((l) => (
                <polyline key={l.color} points={l.points} stroke={l.color} />
              ))}
            </g>
          </svg>
        </div>
        <div className="flex w-[92px] flex-col justify-between pt-1 pb-[2px] pl-[5px]">
          <span>60.671</span>
          <span>40.5687</span>
        </div>
      </section>

      <section className="flex">
        <div className="relative min-w-0 flex-1 overflow-hidden border-2 border-black">
          <h2 className="absolute top-[6px] left-[7px]">ZigZagCallRepaintLegs(own version) 0.000000</h2>
          <svg className="block h-24 w-full" role="img" aria-label="ZigZag legs">
            <g transform="translate(-10 -1372)" fill="none" stroke="#000" strokeWidth="2" shapeRendering="crispEdges">
              <polyline points={zigzag} />
            </g>
          </svg>
        </div>
        <div className="flex w-[92px] flex-col justify-between py-1 pl-[5px]">
          <span>1.5</span>
          <span>0.00</span>
          <span>-1.5</span>
        </div>
      </section>

      <div className="flex">
        {times.map((t) => (
          <div key={t} className="w-32 shrink-0 whitespace-nowrap">
            <div className="ml-[2px] h-[6px] w-[2px] bg-black" />
            29 Mar {t}
          </div>
        ))}
      </div>
    </div>
  </main>
);

const TabBar = () => (
  <div role="tablist" className="flex h-11 items-start border-t-2 border-b-2 border-white">
    <div className="flex h-full w-full items-start border-t-2 border-black">
      <button type="button" role="tab" aria-selected="false" className="h-9 w-[173px] pl-[6px] text-[#444]">
        EURGBP,M5
      </button>
      <button
        type="button"
        role="tab"
        aria-selected="true"
        className="-mt-[2px] h-10 w-[158px] border-x-2 border-b-2 border-black bg-white pr-1 shadow-[2px_2px_0_#b0b0b0]"
      >
        EURGBP,M1
      </button>
      <button type="button" role="tab" aria-selected="false" className="mt-1 h-7 w-[163px] border-r-2 border-[#505050] text-[#444]">
        EURCHF,M5
      </button>
      <div className="mt-[10px] mr-5 ml-auto flex gap-8">
        <button type="button" aria-label="Scroll tabs left" className="h-3 border-y-[6px] border-r-[6px] border-y-transparent border-r-[#909090]" />
        <button type="button" aria-label="Scroll tabs right" className="h-3 border-y-[6px] border-l-[6px] border-y-transparent border-l-[#909090]" />
      </div>
    </div>
  </div>
);

const statusCell = 'my-[6px] flex shrink-0 items-center border-l-2 border-[#8a8a8a] shadow-[inset_2px_0_0_#fff]';

const StatusBar = () => (
  <footer className="flex h-11 items-stretch">
    <div className="flex flex-1 items-center pt-1 pl-[3px]">For Help, press F1</div>
    <div className={clsx(statusCell, 'w-[219px] pt-1 pl-2')}>M1 ULTIMATE</div>
    <div className={clsx(statusCell, 'w-[200px]')} />
    <div className={clsx(statusCell, 'w-36')} />
    <div className={clsx(statusCell, 'w-[142px]')} />
    <div className={clsx(statusCell, 'w-[139px]')} />
    <div className={clsx(statusCell, 'w-[142px]')} />
    <div className={clsx(statusCell, 'w-[132px]')} />
    <div className={clsx(statusCell, 'w-[277px] gap-[6px] pl-[9px]')}>
      <svg viewBox="0 0 47 26" className="h-[26px] w-[47px]" shapeRendering="crispEdges" aria-hidden="true">
        {[0, 1, 2, 3, 4, 5, 6, 7].map((i) => (
          <g key={i}>
            <rect x={i * 6} y="0" width="4" height={18 - i * 2} fill="#5f7a12" />
            <rect x={i * 6} y={20 - i * 2} width="4" height={6 + i * 2} fill="#0a4262" />
          </g>
        ))}
      </svg>
      <span className="pt-1">154427/237 kb</span>
      <svg viewBox="0 0 30 32" className="-mb-[6px] ml-auto h-8 w-[30px] self-end" stroke="#808080" strokeWidth="2" aria-hidden="true">
        <path d="M0 32L30 2M8 32L30 10M16 32L30 18M24 32l6-6" />
      </svg>
    </div>
  </footer>
);

export default function App() {
  return (
    <div className='flex min-h-screen flex-col bg-[#e4e4e4] font-["DejaVu_Sans_Condensed","DejaVu_Sans",sans-serif] text-[22px] leading-7 text-black'>
      <MenuBar />
      <Toolbar />
      <ChartWindow />
      <TabBar />
      <StatusBar />
    </div>
  );
}
